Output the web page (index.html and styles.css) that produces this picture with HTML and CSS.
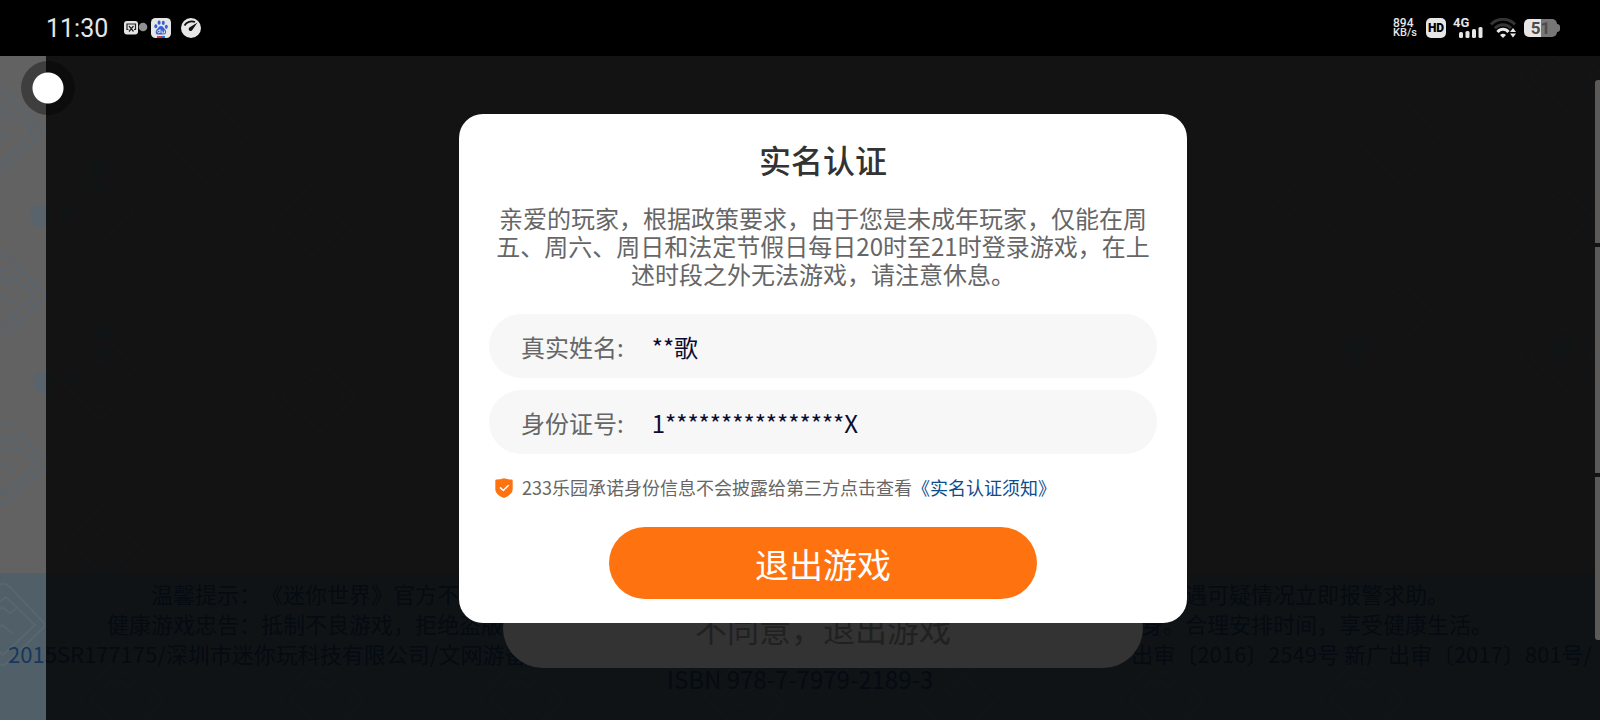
FILE: index.html
```html
<!DOCTYPE html>
<html lang="zh-CN">
<head>
<meta charset="utf-8">
<meta name="viewport" content="width=device-width, initial-scale=1">
<title>实名认证</title>
<link rel="stylesheet" href="styles.css">
</head>
<body>
<header class="status">
  <div class="status-group">
    <time class="clock">11:30</time>
    <div class="apps">
      <svg class="icon" width="24" height="20" viewBox="0 0 24 20" aria-hidden="true">
        <rect x="0" y="3" width="14" height="13.500" rx="3" fill="#e4e4e4"/>
        <path d="M4.500 11.500H3V6h8.500v5.500H10M5 8l4.500 5.500M9.500 8L5 13.500" fill="none" stroke="#222" stroke-width="1.200"/>
        <circle cx="19" cy="9" r="4.300" fill="#909090"/>
      </svg>
      <svg class="icon" width="20" height="20" viewBox="0 0 20 20" aria-hidden="true">
        <rect width="20" height="20" rx="4.500" fill="#e6e6e6"/>
        <g fill="#3461d6">
          <ellipse cx="4.800" cy="8.300" rx="1.500" ry="2"/>
          <ellipse cx="8.100" cy="4.700" rx="1.500" ry="2.100"/>
          <ellipse cx="12.300" cy="4.900" rx="1.500" ry="2.100"/>
          <ellipse cx="15.300" cy="8.800" rx="1.500" ry="2"/>
          <path d="M10 8c2 0 2.600 2 4 3.300 1.800 1.700 1.400 5.200-1 5.200H7c-2.600 0-3-3.400-1.200-5.100C7.400 10 8 8 10 8z"/>
        </g>
        <path d="M9 11v4M9 13.200a1.300 1.300 0 1 0-.1.900M11 12.500V15h2.500v-2.500" fill="none" stroke="#e6e6e6" stroke-width=".9"/>
        <path d="M6 18h4v2H6z" fill="#d23b3b"/><path d="M10 18h4v2h-4z" fill="#3461d6"/>
      </svg>
      <svg class="icon gauge" width="20" height="20" viewBox="0 0 20 20" aria-hidden="true">
        <circle cx="10" cy="10" r="10" fill="#e6e6e6"/>
        <path d="M3.500 7.500C5.500 3.800 10 2.500 14 4" fill="none" stroke="#111" stroke-width="1.800"/>
        <path d="M16.500 4.500L11.500 11.800A2 2 0 1 1 8.800 9.200z" fill="#111"/>
      </svg>
    </div>
  </div>
  <div class="status-group status-right">
    <div class="speed"><span class="speed-num">894</span><span class="speed-unit">KB/s</span></div>
    <span class="hd">HD</span>
    <div class="signal">
      <span class="net">4G</span>
      <svg class="bars" width="24" height="12" viewBox="0 0 24 12" aria-hidden="true" fill="#e6e6e6">
        <rect x="0" y="6" width="4" height="6" rx="1.500"/><rect x="6.500" y="5" width="4" height="7" rx="1.500"/>
        <rect x="13" y="3" width="4" height="9" rx="1.500"/><rect x="19.500" y="1" width="4" height="11" rx="1.500"/>
      </svg>
    </div>
    <svg class="icon" width="27" height="20" viewBox="0 0 27 20" aria-hidden="true" fill="none">
      <path d="M1 6.500C7.500-.5 18.500-.5 25 6.500" stroke="#343434" stroke-width="3"/>
      <path d="M4.800 10.200C9.500 5.500 16.500 5.500 21.200 10.200" stroke="#343434" stroke-width="3"/>
      <path d="M7.500 14c3-3.600 8-3.600 11 0" stroke="#e8e8e8" stroke-width="3"/>
      <path d="M10 17c1.800-1.800 4.200-1.800 6 0l-3 3z" fill="#e8e8e8"/>
      <path d="M20 14l3-4 3 4zM20 15.500h6l-3 4z" fill="#e8e8e8"/>
    </svg>
    <div class="battery"><span class="battery-level">51</span></div>
  </div>
</header>

<main class="scene">
  <svg class="doodles" width="1600" height="664" aria-hidden="true" fill="none">
    <defs>
      <g id="tile" stroke-width="2">
        <path d="M-38 -3Q-42 0-38 4L-4 38Q0 42 5 38L40 4Q45 0 40-4L8-38Q2-44-4-39z"/>
        <path d="M-30 0L1 30 33 0 4-28z"/>
        <path d="M-12-6L0-18l8 6 6-4M-8 6l8-6 10 8"/>
      </g>
    </defs>
    <g stroke="#59646e">
      <use href="#tile" x="0" y="76"/><use href="#tile" x="2" y="240"/><use href="#tile" x="4" y="408"/>
      <use href="#tile" x="100" y="156"/><use href="#tile" x="100" y="322"/><use href="#tile" x="104" y="490"/>
      <use href="#tile" x="208" y="86"/><use href="#tile" x="312" y="170"/><use href="#tile" x="312" y="340"/>
      <use href="#tile" x="1296" y="170"/><use href="#tile" x="1400" y="86"/><use href="#tile" x="1400" y="256"/>
      <use href="#tile" x="1560" y="20"/><use href="#tile" x="1560" y="160"/><use href="#tile" x="1560" y="300"/>
    </g>
    <g fill="#58636c">
      <circle cx="41" cy="160" r="11"/><circle cx="44" cy="326" r="11"/>
      <ellipse cx="100" cy="111" rx="11" ry="8"/><ellipse cx="100" cy="131" rx="9" ry="7"/><ellipse cx="68" cy="156" rx="8" ry="7"/>
      <ellipse cx="104" cy="276" rx="11" ry="8"/><ellipse cx="102" cy="297" rx="9" ry="7"/><ellipse cx="71" cy="324" rx="8" ry="6"/>
      <ellipse cx="1356" cy="290" rx="13" ry="9"/><ellipse cx="1356" cy="308" rx="9" ry="6"/><ellipse cx="1562" cy="292" rx="12" ry="8"/>
    </g>
  </svg>
  <footer class="legal">
    <svg class="legal-doodles" width="1600" height="147" aria-hidden="true" fill="none" stroke="#586670">
      <use href="#tile" x="2" y="52"/><use href="#tile" x="120" y="126"/><use href="#tile" x="320" y="126"/>
      <use href="#tile" x="520" y="126"/><use href="#tile" x="740" y="130"/><use href="#tile" x="960" y="130"/>
      <use href="#tile" x="1160" y="126"/><use href="#tile" x="1360" y="126"/>
    </svg>
    <p class="legal-line legal-tip"><span>温馨提示：《迷你世界》官方不</span><span>遇可疑情况立即报警求助。</span></p>
    <p class="legal-line legal-advice">健康游戏忠告：抵制不良游戏，拒绝盗版游戏。注意自我保护，谨防受骗上当。适度游戏益脑，沉迷游戏伤身。合理安排时间，享受健康生活。</p>
    <p class="legal-line legal-license"><span>2015SR177175/深圳市迷你玩科技有限公司/文网游备</span><span>出审〔2016〕2549号 新广出审〔2017〕801号/</span></p>
    <p class="legal-isbn">ISBN 978-7-7979-2189-3</p>
  </footer>

  <div class="consent"><button class="decline" type="button">不同意，退出游戏</button></div>

  <div class="overlay">
    <section class="dialog" role="dialog" aria-labelledby="dialog-title">
      <h1 class="title" id="dialog-title">实名认证</h1>
      <p class="message">亲爱的玩家，根据政策要求，由于您是未成年玩家，仅能在周五、周六、周日和法定节假日每日20时至21时登录游戏，在上述时段之外无法游戏，请注意休息。</p>
      <form class="form">
        <div class="field">
          <label for="real-name">真实姓名:</label>
          <input id="real-name" type="text" value="**歌" readonly>
        </div>
        <div class="field">
          <label for="id-number">身份证号:</label>
          <input id="id-number" type="text" value="1****************X" readonly>
        </div>
        <p class="notice">
          <svg class="shield" width="18" height="20" viewBox="0 0 18 20" aria-hidden="true">
            <path d="M1.500 1.500Q5 1.500 9 .3 13 1.500 16.500 1.500q1.200 0 1.200 1.200V11c0 4.500-4 7-8.700 9C4.300 18 .3 15.500.3 11V2.700Q.3 1.500 1.500 1.500z" fill="#ff7210"/>
            <path d="M5.500 9.800l2.800 2.700 5-5" fill="none" stroke="#fff" stroke-width="1.600" stroke-linecap="round" stroke-linejoin="round"/>
          </svg>
          <span>233乐园承诺身份信息不会披露给第三方点击查看<a href="#notice">《实名认证须知》</a></span>
        </p>
        <button class="exit" type="button">退出游戏</button>
      </form>
    </section>
  </div>

  <div class="joystick"></div>
  <div class="edge"><i class="edge-a"></i><i class="edge-b"></i><i class="edge-c"></i></div>
</main>
</body>
</html>
```

FILE: styles.css
```css
* { box-sizing: border-box; }

body {
  margin: 0;
  min-height: 100vh;
  display: flex;
  flex-direction: column;
  background: #000;
  font-family: "Noto Sans CJK SC", sans-serif;
  text-spacing-trim: space-all;
}

h1, p { margin: 0; }

button, input { font-family: inherit; border: 0; padding: 0; }

/* Status bar */
.status {
  height: 56px;
  padding: 0 40px 0 46px;
  display: flex;
  align-items: center;
  justify-content: space-between;
  color: #e6e6e6;
  font-family: Roboto, sans-serif;
}
.status-group, .apps { display: flex; align-items: center; }
.status-group { gap: 16px; }
.status-right { gap: 7px; }
.apps { gap: 3px; }
.icon { display: block; }
.gauge { margin-left: 7px; }
.clock { font-size: 25px; line-height: 32px; padding-top: 1px; }
.speed {
  width: 26px;
  display: flex;
  flex-direction: column;
  font-size: 11px;
  line-height: 10px;
  font-weight: 500;
}
.speed-num { font-size: 12px; }
.hd {
  width: 20px;
  height: 20px;
  border-radius: 5px;
  background: #e6e6e6;
  color: #000;
  font-size: 12px;
  font-weight: 900;
  line-height: 20px;
  text-align: center;
}
.signal {
  width: 30px;
  height: 20px;
  display: grid;
}
.net {
  grid-area: 1 / 1;
  font-size: 13px;
  line-height: 10px;
  font-weight: 700;
}
.bars { grid-area: 1 / 1; place-self: end; }
.battery {
  width: 36px;
  display: flex;
  align-items: center;
}
.battery::after {
  content: "";
  width: 3px;
  height: 8px;
  border-radius: 0 3px 3px 0;
  background: #777;
}
.battery-level {
  width: 33px;
  height: 18px;
  border-radius: 5px;
  background: linear-gradient(90deg, #e6e6e6 53%, #777 53%);
  color: #4c4c4c;
  font-size: 17px;
  font-weight: 700;
  line-height: 18px;
  text-align: center;
}

/* Game scene */
.scene {
  flex: 1;
  position: relative;
  display: flex;
  flex-direction: column;
  overflow: hidden;
  background: #626262;
}
.doodles, .legal-doodles { position: absolute; top: 0; left: 0; }
.legal {
  position: relative;
  margin-top: auto;
  padding: 5px 8px 30px;
  background: #515f69;
  color: #17375c;
  font-size: 22px;
  text-align: center;
  white-space: nowrap;
}
.legal-line { position: relative; line-height: 30px; }
.legal-tip, .legal-license { display: flex; justify-content: space-between; }
.legal-tip { max-width: 1298px; margin: 0 auto; }
.legal-isbn { position: relative; font-size: 24px; line-height: 22px; }

.consent {
  position: absolute;
  inset: 0 0 0 46px;
  display: flex;
  align-items: flex-end;
  justify-content: center;
  padding-bottom: 52px;
}
.decline {
  width: 640px;
  height: 80px;
  border-radius: 40px;
  background: #fff;
  color: #a3a3a3;
  font-size: 32px;
}

/* Real-name dialog */
.overlay {
  position: absolute;
  inset: 0 0 0 46px;
  display: flex;
  align-items: flex-start;
  justify-content: center;
  padding-top: 58px;
  background: rgba(0, 0, 0, 0.8);
}
.dialog {
  width: 728px;
  padding: 22px 30px 24px;
  border-radius: 24px;
  background: #fff;
  text-align: center;
}
.title {
  color: #333;
  font-size: 32px;
  font-weight: 500;
  line-height: 46px;
}
.message {
  margin: 22px 0 26px;
  color: #666;
  font-size: 24px;
  line-height: 28px;
}
.form {
  display: flex;
  flex-direction: column;
  gap: 12px;
}
.field {
  height: 64px;
  padding: 0 32px;
  border-radius: 32px;
  display: flex;
  align-items: center;
  gap: 28px;
  background: #f7f7f7;
  color: #666;
  font-size: 24px;
}
.field input {
  flex: 1;
  min-width: 0;
  background: transparent;
  color: #0c0c33;
  font-size: 24px;
  outline: 0;
}
.notice {
  margin: 8px 0 14px;
  padding-left: 6px;
  display: flex;
  align-items: center;
  gap: 9px;
  color: #666;
  font-size: 18px;
  line-height: 27px;
}
.notice a { color: #0c4c8c; text-decoration: none; }
.exit {
  width: 428px;
  height: 72px;
  border-radius: 36px;
  align-self: center;
  background: #ff7210;
  color: #fff;
  font-size: 34px;
}

/* Controls floating above the game */
.joystick {
  position: absolute;
  top: 5px;
  left: 21px;
  width: 54px;
  height: 54px;
  border-radius: 50%;
  background: radial-gradient(circle, #fff 15px, rgba(0, 0, 0, 0.37) 16px);
}
.edge {
  position: absolute;
  top: 24px;
  right: 0;
  bottom: 80px;
  width: 5px;
  display: flex;
  flex-direction: column;
  gap: 4px;
}
.edge i { background: #5b5a58; }
.edge-a { flex: 163; border-top-left-radius: 3px; }
.edge-b { flex: 226; }
.edge-c { flex: 163; border-bottom-left-radius: 3px; }
```
